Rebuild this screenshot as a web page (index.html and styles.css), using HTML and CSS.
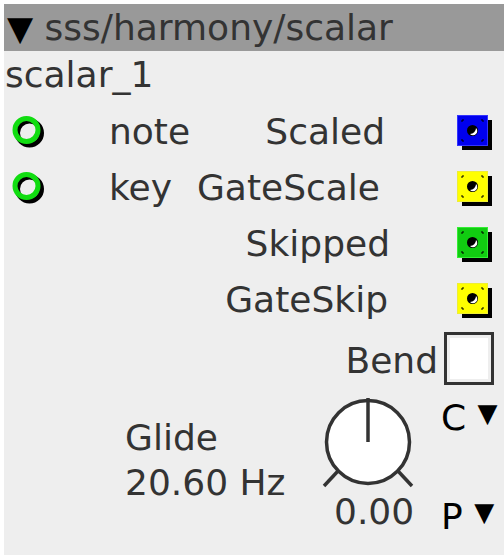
FILE: index.html
```html
<!DOCTYPE html>
<html lang="en">
<head>
    <meta charset="UTF-8">
    <title>sss/harmony/scalar</title>
    <link rel="stylesheet" href="styles.css">
</head>
<body>
    <div class="module">
        <div class="module-header"><span class="caret">▼</span> sss/harmony/scalar</div>
        <div class="module-name">scalar_1</div>

        <div class="ports">
            <div class="port-row">
                <svg class="in-port" width="36" height="36" viewBox="0 0 36 36">
                    <circle cx="17.5" cy="18" r="12" fill="none" stroke="#000" stroke-width="5"/>
                    <circle cx="14.5" cy="15" r="11.5" fill="none" stroke="#11dd11" stroke-width="5"/>
                </svg>
                <span class="in-label">note</span>
                <span class="out-label out-scaled">Scaled</span>
                <svg class="out-port" width="36" height="36" viewBox="0 0 36 36">
                    <rect x="5" y="5" width="30" height="30" fill="#000"/>
                    <rect x="0.5" y="0.5" width="30" height="30" fill="#0000ee" stroke="#3333ff"/>
                    <path d="M5 5h2M5 5v2M24 5h2M26 5v2M5 26v-2M5 26h2M26 26h-2M26 26v-2" stroke="#000" stroke-width="1"/>
                    <circle cx="15.5" cy="15.5" r="5.5" fill="#000"/>
                    <path d="M13 19 A4 4 0 0 0 19 13 A6 6 0 0 1 13 19z" fill="#fff"/>
                </svg>
            </div>
            <div class="port-row">
                <svg class="in-port" width="36" height="36" viewBox="0 0 36 36">
                    <circle cx="17.5" cy="18" r="12" fill="none" stroke="#000" stroke-width="5"/>
                    <circle cx="14.5" cy="15" r="11.5" fill="none" stroke="#11dd11" stroke-width="5"/>
                </svg>
                <span class="in-label">key</span>
                <span class="out-label out-gatescale">GateScale</span>
                <svg class="out-port" width="36" height="36" viewBox="0 0 36 36">
                    <rect x="5" y="5" width="30" height="30" fill="#000"/>
                    <rect x="0.5" y="0.5" width="30" height="30" fill="#ffff00" stroke="#eeee33"/>
                    <path d="M5 5h2M5 5v2M24 5h2M26 5v2M5 26v-2M5 26h2M26 26h-2M26 26v-2" stroke="#000" stroke-width="1"/>
                    <circle cx="15.5" cy="15.5" r="5.5" fill="#000"/>
                    <path d="M13 19 A4 4 0 0 0 19 13 A6 6 0 0 1 13 19z" fill="#fff"/>
                </svg>
            </div>
            <div class="port-row">
                <span class="out-label out-skipped">Skipped</span>
                <svg class="out-port" width="36" height="36" viewBox="0 0 36 36">
                    <rect x="5" y="5" width="30" height="30" fill="#000"/>
                    <rect x="0.5" y="0.5" width="30" height="30" fill="#11cc11" stroke="#33ee33"/>
                    <path d="M5 5h2M5 5v2M24 5h2M26 5v2M5 26v-2M5 26h2M26 26h-2M26 26v-2" stroke="#000" stroke-width="1"/>
                    <circle cx="15.5" cy="15.5" r="5.5" fill="#000"/>
                    <path d="M13 19 A4 4 0 0 0 19 13 A6 6 0 0 1 13 19z" fill="#fff"/>
                </svg>
            </div>
            <div class="port-row">
                <span class="out-label out-gateskip">GateSkip</span>
                <svg class="out-port" width="36" height="36" viewBox="0 0 36 36">
                    <rect x="5" y="5" width="30" height="30" fill="#000"/>
                    <rect x="0.5" y="0.5" width="30" height="30" fill="#ffff00" stroke="#eeee33"/>
                    <path d="M5 5h2M5 5v2M24 5h2M26 5v2M5 26v-2M5 26h2M26 26h-2M26 26v-2" stroke="#000" stroke-width="1"/>
                    <circle cx="15.5" cy="15.5" r="5.5" fill="#000"/>
                    <path d="M13 19 A4 4 0 0 0 19 13 A6 6 0 0 1 13 19z" fill="#fff"/>
                </svg>
            </div>
        </div>

        <div class="bend-row">
            <span class="bend-label">Bend</span>
            <div class="checkbox"></div>
        </div>

        <div class="glide-row">
            <div class="glide-label">
                <div>Glide</div>
                <div>20.60 Hz</div>
            </div>
            <div class="knob">
                <svg width="92" height="92" viewBox="0 0 92 92">
                    <circle cx="46" cy="46" r="41.5" fill="#fff" stroke="#333" stroke-width="3.5"/>
                    <line x1="46" y1="2" x2="46" y2="46" stroke="#333" stroke-width="3.5"/>
                    <line x1="2" y1="90" x2="16" y2="75" stroke="#333" stroke-width="3.5"/>
                    <line x1="76" y1="75" x2="90" y2="90" stroke="#333" stroke-width="3.5"/>
                </svg>
                <div class="knob-value">0.00</div>
            </div>
            <div class="selects">
                <div class="select">C <span class="arrow">▼</span></div>
                <div class="select select-bottom">P <span class="arrow">▼</span></div>
            </div>
        </div>
    </div>
</body>
</html>
```

FILE: styles.css
```css
body {
    margin: 0;
    padding: 4px 0 0 4px;
    background: #fff;
    font-family: "DejaVu Sans", sans-serif;
    font-size: 36px;
    color: #333;
    overflow: hidden;
}
.module {
    width: 500px;
    height: 551px;
    background: #eee;
}
.module-header {
    height: 47px;
    line-height: 47px;
    background: #999;
    white-space: nowrap;
}
.caret {
    color: #000;
    font-size: 34px;
    margin-left: 3px;
}
.module-name {
    height: 47px;
    line-height: 47px;
    padding-left: 1px;
}
.ports {
    padding-top: 5px;
}
.port-row {
    display: flex;
    align-items: center;
    height: 56px;
    line-height: 47px;
}
.in-port {
    margin-left: 8px;
    margin-top: 4px;
}
.in-label {
    margin-left: 61px;
}
.out-label {
    margin-left: auto;
    margin-right: 72px;
}
.out-gatescale {
    margin-right: 77px;
}
.out-skipped {
    margin-right: 67px;
}
.out-gateskip {
    margin-right: 69px;
}
.out-port {
    margin-right: 11px;
    margin-top: 4px;
}
.bend-row {
    display: flex;
    justify-content: flex-end;
    align-items: center;
    height: 62px;
    line-height: 47px;
}
.bend-label {
    margin-right: 6px;
    margin-top: 4px;
}
.checkbox {
    width: 50px;
    height: 53px;
    box-sizing: border-box;
    border: 3px solid #333;
    background: #fff;
    box-shadow: inset 0 0 0 3px #eee;
    margin-right: 10px;
}
.glide-row {
    display: flex;
    padding-left: 121px;
}
.glide-label {
    width: 197px;
    padding-top: 26px;
    line-height: 45px;
}
.knob {
    width: 92px;
    padding-top: 7px;
    text-align: center;
}
.knob svg {
    display: block;
}
.knob-value {
    line-height: 47px;
    margin-left: 12px;
}
.selects {
    margin-left: 27px;
    color: #000;
    line-height: 47px;
    padding-top: 1px;
}
.select {
    white-space: nowrap;
}
.select-bottom {
    margin-top: 48px;
}
.arrow {
    font-size: 26px;
    vertical-align: 8px;
}
```
